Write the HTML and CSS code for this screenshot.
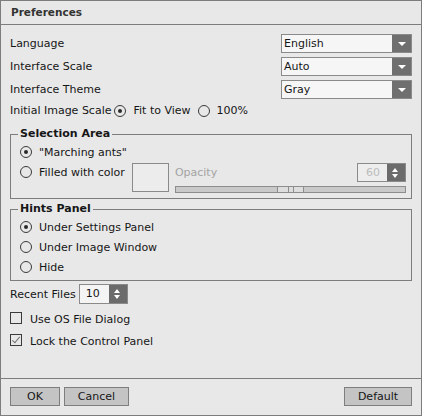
FILE: index.html
```html
<!DOCTYPE html>
<html lang="en">
<head>
    <meta charset="UTF-8">
    <title>Preferences</title>
    <link rel="stylesheet" href="styles.css">
</head>
<body>
    <div class="window">
        <div class="title">Preferences</div>

        <div class="content">
            <div class="row">
                <span>Language</span>
                <div class="select"><span class="value">English</span><span class="arrow"></span></div>
            </div>
            <div class="row">
                <span>Interface Scale</span>
                <div class="select"><span class="value">Auto</span><span class="arrow"></span></div>
            </div>
            <div class="row">
                <span>Interface Theme</span>
                <div class="select"><span class="value">Gray</span><span class="arrow"></span></div>
            </div>

            <div class="row scale-row">
                <span>Initial Image Scale</span>
                <label class="option"><span class="radio checked"></span>Fit to View</label>
                <label class="option"><span class="radio"></span>100%</label>
            </div>

            <fieldset class="group">
                <legend>Selection Area</legend>
                <label class="option line"><span class="radio checked"></span>"Marching ants"</label>
                <div class="fill-row">
                    <label class="option line"><span class="radio"></span>Filled with color</label>
                    <div class="swatch"></div>
                    <div class="opacity">
                        <div class="opacity-top">
                            <span class="muted">Opacity</span>
                            <div class="spin disabled"><span class="value">60</span><span class="spin-btn"></span></div>
                        </div>
                        <div class="slider"><span class="thumb"></span></div>
                    </div>
                </div>
            </fieldset>

            <fieldset class="group hints">
                <legend>Hints Panel</legend>
                <label class="option line"><span class="radio checked"></span>Under Settings Panel</label>
                <label class="option line"><span class="radio"></span>Under Image Window</label>
                <label class="option line"><span class="radio"></span>Hide</label>
            </fieldset>

            <div class="recent">
                <span>Recent Files</span>
                <div class="spin small"><span class="value">10</span><span class="spin-btn"></span></div>
            </div>

            <label class="check-row"><span class="check"></span>Use OS File Dialog</label>
            <label class="check-row"><span class="check checked"></span>Lock the Control Panel</label>
        </div>

        <div class="footer">
            <button class="btn ok">OK</button>
            <button class="btn cancel">Cancel</button>
            <button class="btn default">Default</button>
        </div>
    </div>
</body>
</html>
```

FILE: styles.css
```css
* {
    box-sizing: border-box;
}
body {
    margin: 0;
    background: #e8e8e8;
    font-family: "DejaVu Sans", Verdana, sans-serif;
    font-size: 11px;
    color: #161616;
}
.window {
    width: 422px;
    height: 416px;
    border: 1px solid #7d7d7d;
    background: #e8e8e8;
    display: flex;
    flex-direction: column;
}
.title {
    height: 24px;
    line-height: 23px;
    padding-left: 10px;
    font-weight: bold;
    font-size: 10.5px;
    color: #333;
    border-bottom: 1px solid #7d7d7d;
}
.content {
    padding: 9px 9px 0 9px;
}
.row {
    display: flex;
    align-items: center;
    justify-content: space-between;
    height: 19px;
    margin-bottom: 4px;
}
.select {
    width: 131px;
    height: 19px;
    border: 1px solid #8a8a8a;
    background: #f6f6f6;
    display: flex;
}
.select .value {
    flex: 1;
    padding-left: 2px;
    line-height: 17px;
}
.arrow {
    width: 19px;
    background: #6f6f6f;
    position: relative;
}
.arrow::after {
    content: "";
    position: absolute;
    left: 6px;
    top: 7px;
    border-left: 4px solid transparent;
    border-right: 4px solid transparent;
    border-top: 4px solid #fff;
}
.scale-row {
    justify-content: flex-start;
    margin-top: -2px;
    margin-bottom: 0;
    gap: 3px;
}
.scale-row .option + .option {
    margin-left: 4px;
}
.option {
    display: flex;
    align-items: center;
    gap: 7px;
}
.radio {
    width: 12px;
    height: 12px;
    border: 1px solid #3a3a3a;
    border-radius: 50%;
    display: inline-flex;
    align-items: center;
    justify-content: center;
}
.radio.checked::after {
    content: "";
    width: 4px;
    height: 4px;
    border-radius: 50%;
    background: #2a2a2a;
}
.group {
    margin: 7px 0 0 0;
    padding: 0 5px 5px 9px;
    border: 1px solid #7d7d7d;
}
.group legend {
    font-weight: bold;
    line-height: 14px;
    padding: 0 2px;
    margin-left: -2px;
}
.line {
    height: 20px;
}
.group > .line:first-of-type {
    margin-top: 1px;
}
.fill-row {
    display: flex;
    align-items: flex-start;
}
.swatch {
    width: 37px;
    height: 29px;
    margin: 1px 0 0 7px;
    border: 1px solid #8a8a8a;
    background: #ececec;
}
.opacity {
    flex: 1;
    margin-left: 6px;
}
.opacity-top {
    display: flex;
    align-items: center;
    justify-content: space-between;
    height: 20px;
}
.muted {
    color: #a3a3a3;
}
.spin {
    width: 49px;
    height: 20px;
    border: 1px solid #8a8a8a;
    background: #f4f4f4;
    display: flex;
}
.spin .value {
    flex: 1;
    padding-left: 6px;
    line-height: 18px;
}
.spin.disabled {
    height: 19px;
    margin-top: 1px;
    background: #ededed;
}
.spin.disabled .value {
    color: #bcbcbc;
    padding-left: 8px;
    line-height: 17px;
}
.spin-btn {
    width: 18px;
    background: #6b6b6b;
    position: relative;
}
.spin-btn::before,
.spin-btn::after {
    content: "";
    position: absolute;
    left: 5px;
    border-left: 3.5px solid transparent;
    border-right: 3.5px solid transparent;
}
.spin-btn::before {
    top: 4px;
    border-bottom: 4px solid #fff;
}
.spin-btn::after {
    top: 10px;
    border-top: 4px solid #fff;
}
.slider {
    height: 7px;
    margin-top: 4px;
    border: 1px solid #8d8d8d;
    background: #c9c9c9;
    position: relative;
}
.thumb {
    position: absolute;
    left: 101px;
    top: -1px;
    width: 27px;
    height: 7px;
    border: 1px solid #8d8d8d;
    background: #dedede;
}
.thumb::after {
    content: "";
    position: absolute;
    left: 10px;
    top: 0;
    width: 4px;
    height: 5px;
    border-left: 1px solid #8d8d8d;
    border-right: 1px solid #8d8d8d;
}
.hints {
    margin-top: 3px;
    padding-bottom: 3px;
}
.recent {
    display: flex;
    align-items: center;
    gap: 3px;
    margin-top: 3px;
}
.check-row {
    display: flex;
    align-items: center;
    gap: 8px;
    height: 20px;
    margin-top: 2px;
}
.recent + .check-row {
    margin-top: 5px;
}
.check {
    width: 12px;
    height: 12px;
    border: 1px solid #3a3a3a;
    margin-top: -2px;
    position: relative;
}
.check.checked::after {
    content: "";
    position: absolute;
    left: 3px;
    top: 0;
    width: 3px;
    height: 7px;
    border-right: 1px solid #707070;
    border-bottom: 1px solid #707070;
    transform: rotate(40deg);
}
.footer {
    margin-top: auto;
    border-top: 1px solid #7d7d7d;
    padding: 8px 9px 9px 9px;
    display: flex;
    gap: 4px;
}
.btn {
    height: 19px;
    border: 1px solid #7e7e7e;
    background: #c4c4c4;
    font-family: inherit;
    font-size: 11px;
    color: #161616;
    padding: 0;
}
.ok {
    width: 50px;
}
.cancel {
    width: 65px;
}
.default {
    width: 68px;
    margin-left: auto;
}
```
